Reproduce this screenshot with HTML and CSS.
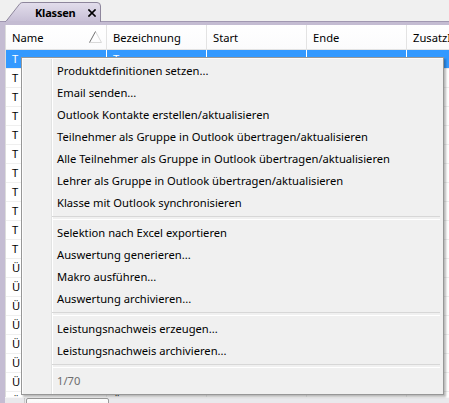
FILE: index.html
```html
<!DOCTYPE html>
<html lang="de">
<head>
<meta charset="utf-8">
<title>Klassen</title>
<link rel="stylesheet" href="styles.css">
</head>
<body>
<div class="app">
  <div class="tabbar">
    <div class="tab">
      <svg class="tab-shape" width="96" height="20" viewBox="0 0 96 20">
        <defs>
          <linearGradient id="tg" x1="0" y1="0" x2="0" y2="1">
            <stop offset="0" stop-color="#e3deec"/>
            <stop offset="1" stop-color="#c6bed5"/>
          </linearGradient>
        </defs>
        <path d="M0.5,20 L15,1.5 Q16,0.5 18,0.5 L92,0.5 Q95.5,0.5 95.5,4 L95.5,20 Z" fill="url(#tg)" stroke="#8e869c" stroke-width="1"/>
        <rect x="1" y="19" width="94" height="2" fill="#c4bcd2"/>
      </svg>
      <span class="tab-title">Klassen</span>
      <svg class="tab-close" width="8" height="8" viewBox="0 0 8 8">
        <path d="M1,1 L7,7 M7,1 L1,7" stroke="#000" stroke-width="1.7" stroke-linecap="square"/>
      </svg>
    </div>
  </div>
  <div class="frame">
    <div class="grid">
      <div class="header">
        <div class="hcell c1"><span>Name</span>
          <svg class="sort" width="13" height="12" viewBox="0 0 13 12">
            <path d="M6.5,0.5 L12.5,11.5 L0.5,11.5" fill="none" stroke="#d8d8d8" stroke-width="1"/>
            <path d="M0.5,11.5 L6.5,0.5" fill="none" stroke="#707070" stroke-width="1"/>
          </svg>
        </div>
        <div class="hcell">Bezeichnung</div>
        <div class="hcell">Start</div>
        <div class="hcell">Ende</div>
        <div class="hcell">ZusatzInfo</div>
      </div>
      <div class="row selected"><div class="cell c1">T</div><div class="cell">T</div><div class="cell"></div><div class="cell"></div><div class="cell"></div></div>
      <div class="row"><div class="cell c1">T</div><div class="cell"></div><div class="cell"></div><div class="cell"></div><div class="cell"></div></div>
      <div class="row"><div class="cell c1">T</div><div class="cell"></div><div class="cell"></div><div class="cell"></div><div class="cell"></div></div>
      <div class="row"><div class="cell c1">T</div><div class="cell"></div><div class="cell"></div><div class="cell"></div><div class="cell"></div></div>
      <div class="row"><div class="cell c1">T</div><div class="cell"></div><div class="cell"></div><div class="cell"></div><div class="cell"></div></div>
      <div class="row"><div class="cell c1">T</div><div class="cell"></div><div class="cell"></div><div class="cell"></div><div class="cell"></div></div>
      <div class="row"><div class="cell c1">T</div><div class="cell"></div><div class="cell"></div><div class="cell"></div><div class="cell"></div></div>
      <div class="row"><div class="cell c1">T</div><div class="cell"></div><div class="cell"></div><div class="cell"></div><div class="cell"></div></div>
      <div class="row"><div class="cell c1">T</div><div class="cell"></div><div class="cell"></div><div class="cell"></div><div class="cell"></div></div>
      <div class="row"><div class="cell c1">T</div><div class="cell"></div><div class="cell"></div><div class="cell"></div><div class="cell"></div></div>
      <div class="row"><div class="cell c1">T</div><div class="cell"></div><div class="cell"></div><div class="cell"></div><div class="cell"></div></div>
      <div class="row"><div class="cell c1">Ü</div><div class="cell"></div><div class="cell"></div><div class="cell"></div><div class="cell"></div></div>
      <div class="row"><div class="cell c1">Ü</div><div class="cell"></div><div class="cell"></div><div class="cell"></div><div class="cell"></div></div>
      <div class="row"><div class="cell c1">Ü</div><div class="cell"></div><div class="cell"></div><div class="cell"></div><div class="cell"></div></div>
      <div class="row"><div class="cell c1">Ü</div><div class="cell"></div><div class="cell"></div><div class="cell"></div><div class="cell"></div></div>
      <div class="row"><div class="cell c1">Ü</div><div class="cell"></div><div class="cell"></div><div class="cell"></div><div class="cell"></div></div>
      <div class="row"><div class="cell c1">Ü</div><div class="cell"></div><div class="cell"></div><div class="cell"></div><div class="cell"></div></div>
      <div class="row"><div class="cell c1">Ü</div><div class="cell"></div><div class="cell"></div><div class="cell"></div><div class="cell"></div></div>
      <div class="row"><div class="cell c1">Ü</div><div class="cell">Ü</div><div class="cell"></div><div class="cell"></div><div class="cell"></div></div>
      <div class="row"><div class="cell c1">Ü</div><div class="cell">Ü</div><div class="cell"></div><div class="cell"></div><div class="cell"></div></div>
    </div>
    <div class="hscroll">
      <div class="sb-btn"></div>
      <div class="sb-thumb"></div>
    </div>
  </div>

  <div class="menu">
    <div class="item">Produktdefinitionen setzen...</div>
    <div class="item">Email senden...</div>
    <div class="item">Outlook Kontakte erstellen/aktualisieren</div>
    <div class="item">Teilnehmer als Gruppe in Outlook übertragen/aktualisieren</div>
    <div class="item">Alle Teilnehmer als Gruppe in Outlook übertragen/aktualisieren</div>
    <div class="item">Lehrer als Gruppe in Outlook übertragen/aktualisieren</div>
    <div class="item">Klasse mit Outlook synchronisieren</div>
    <div class="sep"></div>
    <div class="item">Selektion nach Excel exportieren</div>
    <div class="item">Auswertung generieren...</div>
    <div class="item">Makro ausführen...</div>
    <div class="item">Auswertung archivieren...</div>
    <div class="sep"></div>
    <div class="item">Leistungsnachweis erzeugen...</div>
    <div class="item">Leistungsnachweis archivieren...</div>
    <div class="sep"></div>
    <div class="item disabled">1/70</div>
  </div>
</div>
</body>
</html>
```

FILE: styles.css
```css
* { box-sizing: border-box; }
html, body { margin: 0; padding: 0; }
body {
  width: 449px;
  height: 403px;
  overflow: hidden;
  background: #f0f0f0;
  font-family: "Noto Sans", "Open Sans", sans-serif;
  font-size: 11.2px;
  color: #000;
}
.app {
  position: relative;
  width: 449px;
  height: 403px;
  overflow: hidden;
  display: flex;
  flex-direction: column;
}

/* tab strip */
.tabbar {
  flex: none;
  height: 22px;
  display: flex;
  align-items: flex-end;
  padding-left: 5px;
  background: #f0f0f0;
  border-bottom: 1px solid #a198b1;
}
.tab {
  position: relative;
  width: 96px;
  height: 20px;
  margin-bottom: -1px;
  display: flex;
  align-items: center;
  padding-left: 30px;
  padding-top: 1px;
}
.tab-shape { position: absolute; left: 0; top: 0; }
.tab-title {
  position: relative;
  font-weight: bold;
  font-size: 11px;
  letter-spacing: -0.2px;
}
.tab-close {
  position: relative;
  margin-left: 12px;
  margin-top: 1px;
}

/* frame + grid */
.frame {
  flex: none;
  background: #c4bcd2;
  padding: 3px 0 0 5px;
  display: flex;
  flex-direction: column;
}
.grid {
  flex: none;
  width: 560px;
  height: 372px;
  background: #fff;
  border-left: 1px solid #dcdcdc;
  overflow: hidden;
}
.header {
  display: flex;
  height: 25px;
  background: linear-gradient(#ffffff, #fbfbfc);
  border-bottom: 1px solid #e3e3e3;
}
.hcell {
  flex: none;
  width: 100px;
  display: flex;
  align-items: center;
  padding-left: 6px;
  padding-top: 1px;
  border-right: 1px solid #e3e3e3;
  white-space: nowrap;
  overflow: hidden;
}
.hcell.c1 {
  width: 101px;
  justify-content: space-between;
  padding-right: 4px;
}
.sort { margin-top: -1px; }

.row {
  display: flex;
  height: 19px;
  border-bottom: 1px solid #efefef;
}
.cell {
  flex: none;
  width: 100px;
  padding-left: 6px;
  line-height: 18px;
  border-right: 1px solid #efefef;
  white-space: nowrap;
  overflow: hidden;
}
.cell.c1 { width: 101px; }
.row.selected { background: #3399ff; color: #fff; }
.row.selected .cell { border-right-color: #ffffff; }

.hscroll {
  flex: none;
  height: 17px;
  display: flex;
  background: #e9e9ec;
  border-top: 1px solid #f7f7f7;
}
.sb-btn {
  width: 19px;
  border-right: 1px solid #c9c9c9;
  margin-left: 1px;
}
.sb-thumb {
  width: 83px;
  margin-left: 1px;
  border: 1px solid #9a9a9a;
  border-radius: 2px;
  background: linear-gradient(#fdfdfd, #ececec);
}

/* context menu */
.menu {
  position: absolute;
  left: 21px;
  top: 57px;
  width: 423px;
  padding: 2px;
  background:
    linear-gradient(to right, transparent 29px, #e2e3e3 29px, #e2e3e3 30px, #ffffff 30px, #ffffff 31px, transparent 31px),
    #f0f0f0;
  border: 1px solid #979797;
  box-shadow: inset 1px 1px 0 #fcfcfc, 2px 2px 2px rgba(0, 0, 0, 0.28);
  display: flex;
  flex-direction: column;
}
.item {
  height: 22px;
  line-height: 22px;
  padding-left: 33px;
  white-space: nowrap;
}
.item.disabled { color: #6d6d6d; }
.sep {
  height: 8px;
  margin-left: 28px;
  margin-right: 1px;
  display: flex;
  align-items: center;
}
.sep::before {
  content: "";
  flex: 1;
  height: 2px;
  border-top: 1px solid #d7d7d7;
  border-bottom: 1px solid #ffffff;
}
```
